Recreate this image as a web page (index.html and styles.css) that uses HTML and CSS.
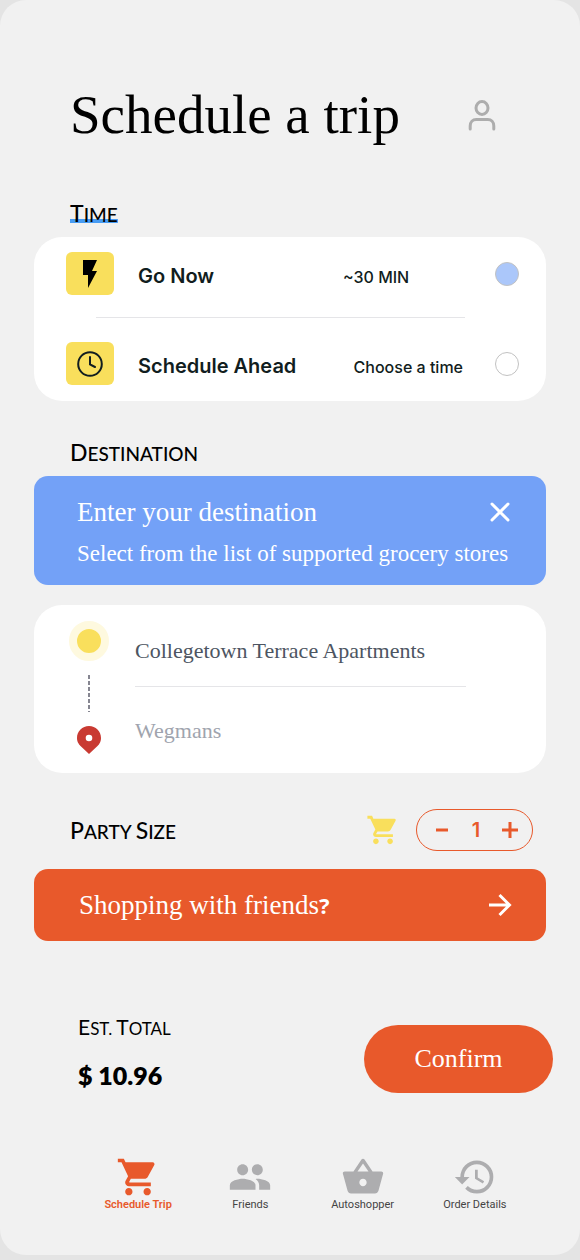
FILE: index.html
```html
<!DOCTYPE html>
<html lang="en">
<head>
<meta charset="utf-8">
<meta name="viewport" content="width=device-width, initial-scale=1">
<title>Schedule a trip</title>
<link rel="stylesheet" href="styles.css">
</head>
<body>
<svg class="sprite" aria-hidden="true">
  <symbol id="cart" viewBox="0 0 24 24"><path d="M7 18c-1.100 0-1.990.9-1.990 2S5.900 22 7 22s2-.9 2-2-.9-2-2-2zM1 2v2h2l3.600 7.590-1.350 2.450c-.16.280-.25.610-.25.960 0 1.100.9 2 2 2h12v-2H7.420c-.14 0-.25-.11-.25-.25l.03-.12.900-1.630h7.450c.750 0 1.410-.41 1.750-1.030l3.580-6.490A1 1 0 0 0 20 4H5.210l-.94-2H1zm16 16c-1.100 0-1.990.9-1.990 2s.89 2 1.990 2 2-.9 2-2-.9-2-2-2z"/></symbol>
</svg>
<div class="screen">
  <header class="header">
    <h1 class="title">Schedule a trip</h1>
    <button class="icon-button" type="button" aria-label="Profile">
      <svg class="profile-icon" viewBox="0 0 28 32"><ellipse cx="14" cy="9" rx="6" ry="6.500"/><path d="M2.200 30v-3c0-4 2.500-6.500 6-6.500h11.600c3.500 0 6 2.500 6 6.500v3"/></svg>
    </button>
  </header>

  <main>
    <h2 class="section-label"><span class="word underlined">Time</span></h2>
    <section class="card time-card">
      <div class="time-row">
        <span class="tile"><svg class="tile-icon" viewBox="0 0 28 32"><path d="M7 2h14l-5 11h5L12 30V17H7z"/></svg></span>
        <label class="option" for="now">Go Now</label>
        <span class="time-value">~30 MIN</span>
        <input class="radio" type="radio" name="time" id="now" checked>
      </div>
      <hr class="divider time-divider">
      <div class="time-row">
        <span class="tile"><svg class="tile-icon clock" viewBox="0 0 28 32"><circle cx="14" cy="16" r="11.800"/><path d="M14 9v7.500l5 2.500"/></svg></span>
        <label class="option" for="ahead">Schedule Ahead</label>
        <button class="time-value choose" type="button">Choose a time</button>
        <input class="radio" type="radio" name="time" id="ahead">
      </div>
    </section>

    <h2 class="section-label destination-label"><span class="word">Destination</span></h2>
    <section class="banner hint">
      <div class="hint-top">
        <p class="banner-title">Enter your destination</p>
        <button class="icon-button" type="button" aria-label="Close">
          <svg class="close-icon" viewBox="0 0 20 20"><path d="M2 2l16 16M18 2L2 18"/></svg>
        </button>
      </div>
      <p class="hint-text">Select from the list of supported grocery stores</p>
    </section>

    <section class="card route">
      <div class="track">
        <span class="origin"></span>
        <span class="dashes"></span>
        <svg class="pin" viewBox="0 0 24 28"><path fill-rule="evenodd" d="M12 0C5.300 0 0 5.300 0 12c0 3.500 1.500 6 3.500 8l8.500 8 8.500-8c2-2 3.500-4.500 3.500-8C24 5.300 18.700 0 12 0zm0 8.700a3.300 3.300 0 1 1 0 6.600 3.300 3.300 0 0 1 0-6.600z"/></svg>
      </div>
      <div class="places">
        <input class="place" type="text" aria-label="Starting point" value="Collegetown Terrace Apartments">
        <hr class="divider">
        <input class="place" type="text" aria-label="Store" placeholder="Wegmans">
      </div>
    </section>

    <section class="party">
      <h2 class="section-label party-label"><span class="word">Party</span> <span class="word">Size</span></h2>
      <svg class="party-cart" aria-hidden="true"><use href="#cart"/></svg>
      <div class="stepper">
        <button class="icon-button" type="button" aria-label="Fewer people"><svg class="step-icon" viewBox="0 0 16 16"><path d="M2 8h12"/></svg></button>
        <output class="count">1</output>
        <button class="icon-button" type="button" aria-label="More people"><svg class="step-icon" viewBox="0 0 16 16"><path d="M0 8h16M8 0v16"/></svg></button>
      </div>
    </section>

    <a class="banner friends" href="#friends">
      <span class="banner-title">Shopping with friends<b class="mark">?</b></span>
      <svg class="arrow-icon" viewBox="0 0 24 24"><path d="M1 12h20M11.500 2l10 10-10 10"/></svg>
    </a>

    <section class="checkout">
      <div class="total">
        <h2 class="section-label total-label"><span class="word">Est.</span> <span class="word">Total</span></h2>
        <p class="amount">$ 10.96</p>
      </div>
      <button class="confirm" type="button">Confirm</button>
    </section>
  </main>

  <nav class="nav" aria-label="Main">
    <a class="nav-item active" href="#trip" aria-current="page"><svg class="nav-icon"><use href="#cart"/></svg>Schedule Trip</a>
    <a class="nav-item" href="#friends"><svg class="nav-icon" viewBox="0 0 24 24"><path d="M16 11c1.660 0 2.990-1.340 2.990-3S17.660 5 16 5s-3 1.340-3 3 1.340 3 3 3zm-8 0c1.660 0 2.990-1.340 2.990-3S9.660 5 8 5 5 6.340 5 8s1.340 3 3 3zm0 2c-2.330 0-7 1.170-7 3.500V19h14v-2.500c0-2.330-4.670-3.500-7-3.500zm8 0c-.29 0-.62.020-.97.050 1.160.840 1.970 1.970 1.970 3.450V19h6v-2.500c0-2.330-4.670-3.500-7-3.500z"/></svg>Friends</a>
    <a class="nav-item" href="#autoshopper"><svg class="nav-icon" viewBox="0 0 24 24"><path d="M17.210 9l-4.380-6.560a1 1 0 0 0-1.660 0L6.790 9H2c-.55 0-1 .45-1 1 0 .09.010.18.040.27l2.540 9.270C3.810 20.380 4.580 21 5.500 21h13c.92 0 1.690-.62 1.930-1.460l2.540-9.270L23 10c0-.55-.45-1-1-1h-4.790zM9 9l3-4.400L15 9H9zm3 8c-1.100 0-2-.9-2-2s.9-2 2-2 2 .9 2 2-.9 2-2 2z"/></svg>Autoshopper</a>
    <a class="nav-item" href="#orders"><svg class="nav-icon" viewBox="0 0 24 24"><path d="M13 3a9 9 0 0 0-9 9H1l3.890 3.890.07.14L9 12H6c0-3.870 3.130-7 7-7s7 3.130 7 7-3.130 7-7 7c-1.930 0-3.680-.79-4.940-2.060l-1.420 1.420A8.950 8.950 0 0 0 13 21a9 9 0 0 0 0-18zm-1 5v5l4.280 2.540.72-1.210-3.500-2.080V8H12z"/></svg>Order Details</a>
  </nav>
</div>
</body>
</html>
```
FILE: styles.css
```css
* {
  box-sizing: border-box;
}

body {
  margin: 0;
  background: #e4e4e4;
  color: #000;
  font-family: "Inter", sans-serif;
}

h1, h2, p, hr {
  margin: 0;
}

button, input {
  padding: 0;
  border: 0;
  background: none;
  color: inherit;
  font: inherit;
}

a {
  color: inherit;
  text-decoration: none;
}

svg {
  display: block;
  flex: none;
}

.sprite {
  position: absolute;
  width: 0;
  height: 0;
}

.screen {
  padding: 83px 34px 44px;
  margin-bottom: 5px;
  border-radius: 26px;
  background: #f1f1f1;
}

.header {
  display: flex;
  align-items: center;
  justify-content: space-between;
  padding: 0 50px 0 36px;
  margin-bottom: 54px;
}

.title {
  font: 400 55px/64px "Liberation Serif", serif;
}

.icon-button {
  display: flex;
  cursor: pointer;
}

.profile-icon {
  width: 28px;
  height: 32px;
  fill: none;
  stroke: #adadad;
  stroke-width: 3;
  stroke-linecap: round;
}

.section-label {
  display: flex;
  align-items: flex-start;
  gap: 4px;
  height: 24px;
  padding-left: 36px;
  margin-bottom: 12px;
  font: 500 19px/24px "Lato", sans-serif;
  text-transform: uppercase;
}

.word {
  display: block;
}

.word::first-letter {
  font-size: 23px;
}

.underlined {
  height: 22px;
  background: linear-gradient(#479cf3, #479cf3) bottom / 100% 4px no-repeat;
}

.card {
  border-radius: 28px;
  background: #fff;
}

.divider {
  border: 0;
  border-top: 1px solid #e5e5e8;
}

.time-card {
  padding: 15px 27px 16px 32px;
}

.time-row {
  display: grid;
  grid-template-columns: 48px 1fr 120px 32px;
  column-gap: 24px;
  align-items: center;
}

.time-divider {
  margin: 22px 54px 24px 30px;
}

.tile {
  display: flex;
  align-items: center;
  justify-content: center;
  height: 43px;
  border-radius: 6px;
  background: #f9df5c;
}

.tile-icon {
  width: 28px;
  height: 32px;
}

.clock {
  fill: none;
  stroke: #111d20;
  stroke-width: 2;
  stroke-linecap: round;
}

.option {
  padding-top: 4px;
  color: #111d20;
  font-size: 20px;
  font-weight: 600;
  line-height: 28px;
  white-space: nowrap;
}

.time-value {
  padding-top: 6px;
  color: #111d20;
  font-size: 16px;
  font-weight: 500;
  line-height: 24px;
  white-space: nowrap;
}

.choose {
  justify-self: end;
}

.radio {
  justify-self: end;
  width: 24px;
  height: 24px;
  margin: 0;
  border: 1px solid #c2c2c2;
  border-radius: 50%;
  appearance: none;
}

.radio:checked {
  background: #abc7fa;
}

.destination-label {
  margin-top: 39px;
}

.banner {
  border-radius: 14px;
  color: #fff;
}

.banner-title {
  font: 400 27px/32px "Liberation Serif", serif;
}

.hint {
  padding: 20px 36px 17px 43px;
  background: #73a1f7;
}

.hint-top {
  display: flex;
  align-items: center;
  justify-content: space-between;
  margin-bottom: 12px;
}

.hint-text {
  font: 400 23px/28px "Liberation Serif", serif;
}

.close-icon {
  width: 20px;
  height: 20px;
  fill: none;
  stroke: #fff;
  stroke-width: 3;
  stroke-linecap: round;
}

.route {
  display: flex;
  gap: 26px;
  padding: 16px 80px 19px 35px;
  margin: 20px 0 36px;
}

.track {
  display: flex;
  flex-direction: column;
  align-items: center;
  gap: 14px;
  width: 40px;
}

.origin {
  width: 40px;
  height: 40px;
  border: 8px solid #fef9df;
  border-radius: 50%;
  background: #f9df5c;
}

.dashes {
  width: 2px;
  height: 37px;
  background: repeating-linear-gradient(#868691 0 4px, transparent 4px 6px);
}

.pin {
  width: 24px;
  height: 28px;
  fill: #c93a32;
}

.places {
  display: flex;
  flex: 1;
  flex-direction: column;
  padding-top: 16px;
}

.place {
  width: 100%;
  color: #4d5562;
  font: 400 22px/28px "Liberation Serif", serif;
}

.place::placeholder {
  color: #a0a4ae;
  opacity: 1;
}

.places .divider {
  margin: 21px 0 30px;
}

.party {
  display: flex;
  align-items: center;
  padding-right: 13px;
  margin-bottom: 18px;
}

.party-label {
  flex: 1;
  margin: 0;
}

.party-cart {
  width: 34px;
  height: 34px;
  margin-right: 16px;
  fill: #f9df5c;
}

.stepper {
  display: flex;
  align-items: center;
  justify-content: space-between;
  width: 117px;
  height: 42px;
  padding: 0 14px 0 17px;
  border: 1px solid #e8592b;
  border-radius: 21px;
  color: #e8592b;
}

.step-icon {
  width: 16px;
  height: 16px;
  fill: none;
  stroke: currentColor;
  stroke-width: 3;
}

.count {
  font-size: 20px;
  font-weight: 600;
}

.friends {
  display: flex;
  align-items: center;
  justify-content: space-between;
  padding: 20px 34px 20px 45px;
  background: #e8592b;
}

.mark {
  font-family: "Noto Sans", sans-serif;
  font-size: 22px;
}

.arrow-icon {
  width: 24px;
  height: 24px;
  fill: none;
  stroke: #fff;
  stroke-width: 3;
}

.checkout {
  display: flex;
  align-items: flex-start;
  justify-content: space-between;
  padding-left: 44px;
  margin: 74px -7px 0 0;
}

.total-label {
  padding: 0;
  margin-bottom: 20px;
  font-size: 17px;
  font-weight: 400;
}

.total-label .word::first-letter {
  font-size: 21px;
}

.amount {
  font: 800 25px/32px "Lato", sans-serif;
}

.confirm {
  width: 189px;
  height: 68px;
  margin-top: 10px;
  border-radius: 34px;
  background: #e8592b;
  color: #fff;
  font: 400 26px/32px "Liberation Serif", serif;
}

.nav {
  display: grid;
  grid-template-columns: repeat(4, 1fr);
  padding: 0 15px 0 48px;
  margin-top: 62px;
}

.nav-item {
  display: flex;
  flex-direction: column;
  align-items: center;
  color: #444;
  font: 400 11px/12px "Roboto", sans-serif;
  white-space: nowrap;
}

.nav-icon {
  width: 44px;
  height: 44px;
  fill: #adadaf;
}

.active {
  color: #e8592b;
  font-weight: 600;
}

.active .nav-icon {
  fill: #e8592b;
}
```
